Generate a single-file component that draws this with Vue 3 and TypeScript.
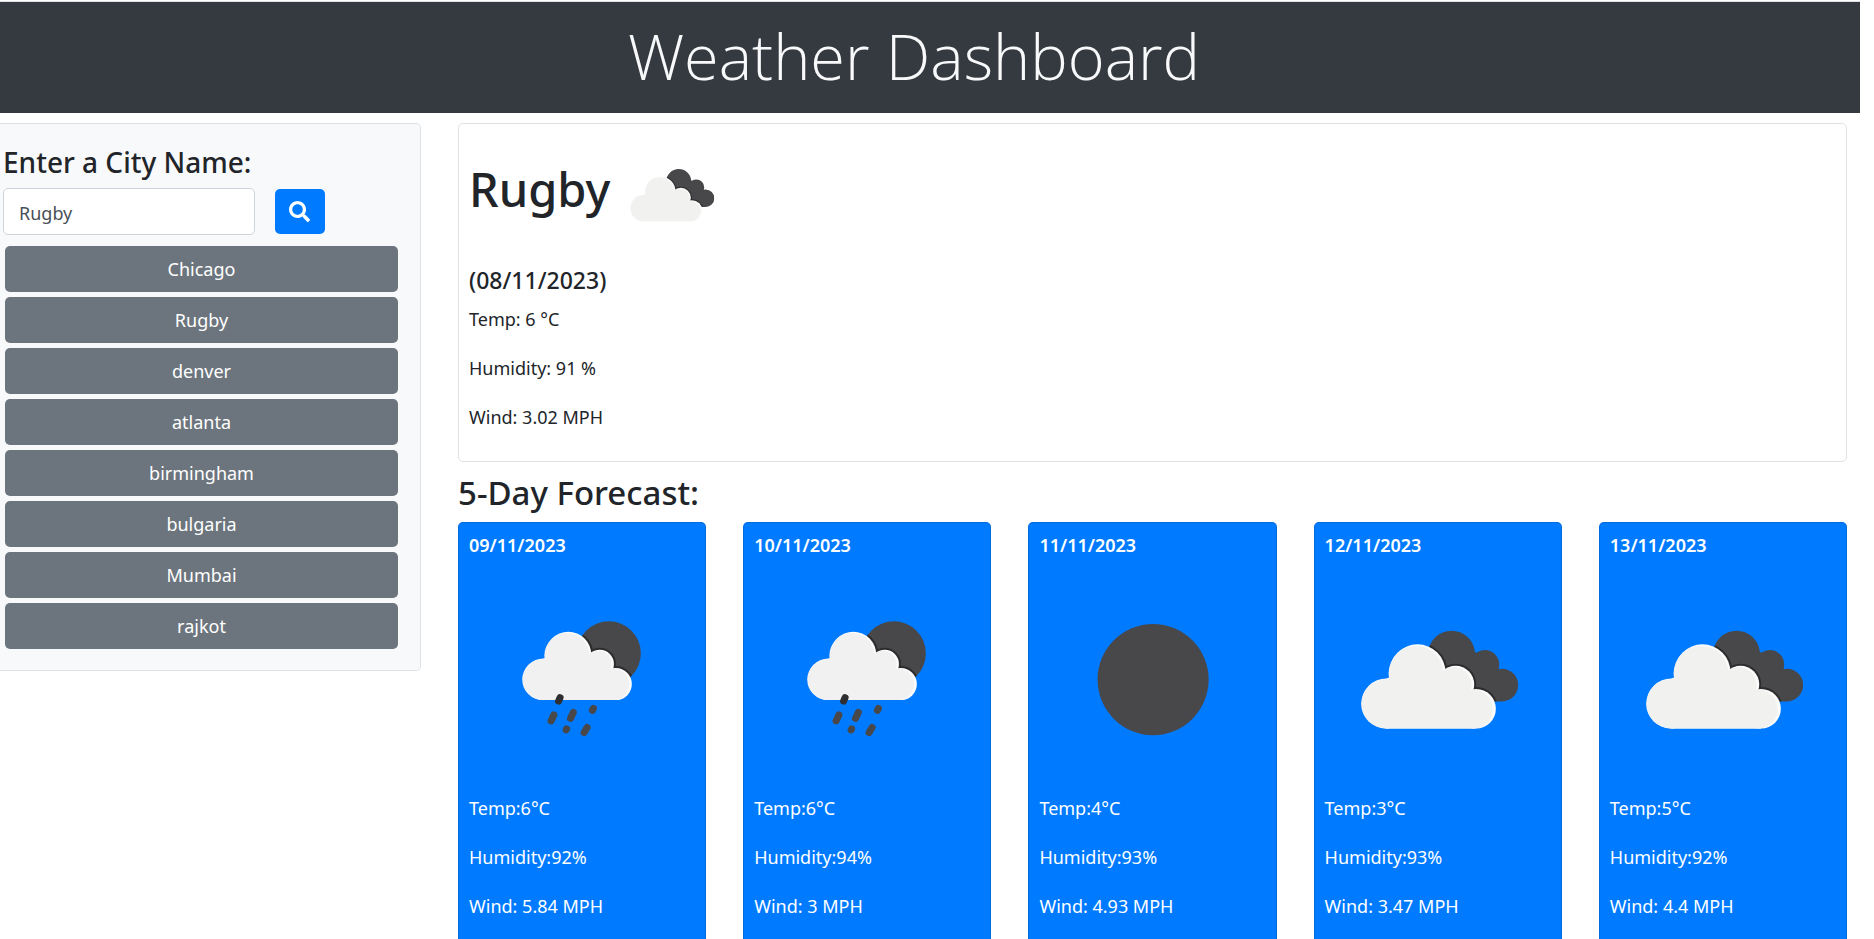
<script setup lang="ts">
import { ref } from 'vue'

type IconName = 'rain' | 'clear' | 'clouds'

interface Forecast {
  date: string
  icon: IconName
  temp: number
  humidity: number
  wind: number
}

const query = ref('Rugby')
const city = ref('Rugby')
const cities = ['Chicago', 'Rugby', 'denver', 'atlanta', 'birmingham', 'bulgaria', 'Mumbai', 'rajkot']

const forecast: Forecast[] = [
  { date: '09/11/2023', icon: 'rain', temp: 6, humidity: 92, wind: 5.84 },
  { date: '10/11/2023', icon: 'rain', temp: 6, humidity: 94, wind: 3 },
  { date: '11/11/2023', icon: 'clear', temp: 4, humidity: 93, wind: 4.93 },
  { date: '12/11/2023', icon: 'clouds', temp: 3, humidity: 93, wind: 3.47 },
  { date: '13/11/2023', icon: 'clouds', temp: 5, humidity: 92, wind: 4.4 },
]

function search() {
  if (query.value.trim()) city.value = query.value.trim()
}
</script>

<template>
  <svg class="sprite" aria-hidden="true">
    <defs>
      <clipPath id="back-cloud">
        <circle cx="126.5" cy="87" r="23.4" />
        <circle cx="159.5" cy="97.5" r="14.6" />
        <circle cx="176.7" cy="118" r="16.3" />
        <path d="M110 87 L149 84 L173 102 L177 134.3 L120 134.3 Z" />
      </clipPath>
      <clipPath id="moon">
        <circle cx="139.7" cy="86.3" r="32" />
      </clipPath>
      <g id="front-cloud">
        <circle cx="61.5" cy="136.3" r="25" />
        <circle cx="92.4" cy="105.3" r="28" />
        <circle cx="130.5" cy="117.3" r="18.6" />
        <circle cx="151" cy="141.6" r="19.7" />
        <path d="M61.5 161.3 L61.5 111.3 L92 100 L130 115 L151 125 L151 161.3 Z" />
      </g>
      <g id="rain-cloud">
        <circle cx="74.5" cy="112.2" r="20.8" />
        <circle cx="99.2" cy="87.7" r="23" />
        <circle cx="130.7" cy="96.8" r="14.1" />
        <circle cx="146.7" cy="117" r="16" />
        <path d="M74.5 133 L74.5 91.4 L99 86 L131 95 L146.7 108 L146.7 133 Z" />
      </g>
    </defs>
    <symbol id="icon-clouds" viewBox="0 0 226 226">
      <g clip-path="url(#back-cloud)">
        <rect width="226" height="226" fill="#48484a" />
        <use href="#front-cloud" fill="none" stroke="#2c2c2e" stroke-width="4" />
      </g>
      <use href="#front-cloud" fill="#fcfcfc" />
      <use href="#front-cloud" fill="#f1f1f0" transform="translate(0.4 3.2) scale(0.98)" />
    </symbol>
    <symbol id="icon-clear" viewBox="0 0 226 226">
      <circle cx="114" cy="112.5" r="55.5" fill="#48484a" />
    </symbol>
    <symbol id="icon-rain" viewBox="0 0 226 226">
      <g clip-path="url(#moon)">
        <rect width="226" height="226" fill="#48484a" />
        <use href="#rain-cloud" fill="none" stroke="#2c2c2e" stroke-width="4" />
      </g>
      <use href="#rain-cloud" fill="#fcfcfc" />
      <use href="#rain-cloud" fill="#f1f1f1" transform="translate(0.6 2.6) scale(0.98)" />
      <g fill="none" stroke="#48484a" stroke-width="7" stroke-linecap="round">
        <path d="M91 130.5 L89.5 134" stroke="#2f2f31" />
        <path d="M84.8 147.8 L82 153.8" />
        <path d="M104.2 145.3 L101.4 151.3" />
        <path d="M124.3 141.3 L123.3 143.3" />
        <path d="M97.5 161.8 L97 162.8" />
        <path d="M118 160.3 L115 165.3" />
      </g>
    </symbol>
  </svg>

  <header class="banner">
    <h1>Weather Dashboard</h1>
  </header>

  <div class="layout">
    <aside class="panel sidebar">
      <form class="search" @submit.prevent="search">
        <label for="city">Enter a City Name:</label>
        <div class="search-row">
          <input id="city" v-model="query" type="text" />
          <button type="submit" aria-label="Search">
            <svg viewBox="0 0 512 512" aria-hidden="true">
              <path fill="currentColor" d="M505 442.7L405.3 343c-4.5-4.5-10.6-7-17-7H372c27.6-35.3 44-79.7 44-128C416 93.1 322.9 0 208 0S0 93.1 0 208s93.1 208 208 208c48.3 0 92.7-16.4 128-44v16.3c0 6.4 2.5 12.5 7 17l99.7 99.7c9.4 9.4 24.6 9.4 33.9 0l28.3-28.3c9.4-9.4 9.4-24.6.1-34zM208 336c-70.7 0-128-57.2-128-128 0-70.7 57.2-128 128-128 70.7 0 128 57.2 128 128 0 70.7-57.2 128-128 128z" />
            </svg>
          </button>
        </div>
      </form>
      <ul class="cities">
        <li v-for="name in cities" :key="name">
          <button type="button" @click="city = name">{{ name }}</button>
        </li>
      </ul>
    </aside>

    <main>
      <section class="panel current">
        <div class="current-head">
          <h2>{{ city }}</h2>
          <svg class="current-icon" role="img" aria-label="Broken clouds"><use href="#icon-clouds" /></svg>
        </div>
        <h3>(08/11/2023)</h3>
        <p>Temp: 6 °C</p>
        <p>Humidity: 91 %</p>
        <p>Wind: 3.02 MPH</p>
      </section>

      <h2 class="forecast-title">5-Day Forecast:</h2>
      <section class="forecast">
        <article v-for="day in forecast" :key="day.date" class="card">
          <h3>{{ day.date }}</h3>
          <svg class="card-icon" role="img" :aria-label="day.icon"><use :href="`#icon-${day.icon}`" /></svg>
          <p>Temp:{{ day.temp }}°C</p>
          <p>Humidity:{{ day.humidity }}%</p>
          <p>Wind: {{ day.wind }} MPH</p>
        </article>
      </section>
    </main>
  </div>
</template>

<style>
body {
  margin: 0;
  background: #fff;
  color: #212529;
  font-family: "Noto Sans", "Open Sans", sans-serif;
  font-size: 18px;
  line-height: 30px;
}
</style>

<style scoped>
h1,
h2,
h3,
p,
ul {
  margin: 0;
  padding: 0;
}

.sprite {
  position: absolute;
  width: 0;
  height: 0;
}

.banner {
  margin: 1px 14px 10px 0;
  padding: 11px 32px 15px 0;
  border-top: 1px solid #dee2e6;
  background: #343a40;
  color: #f8f9fa;
  text-align: center;
}

.banner h1 {
  font-family: "Open Sans", "Noto Sans", sans-serif;
  font-size: 63px;
  font-weight: 300;
  line-height: 85px;
}

.layout {
  display: grid;
  grid-template-columns: 421fr 1389fr;
  gap: 37px;
  align-items: start;
  padding-right: 27px;
}

.panel {
  border: 1px solid #dee2e6;
  border-radius: 5px;
}

.sidebar {
  padding: 20px 22px 21px 3px;
  border-left: 0;
  border-radius: 0 5px 5px 0;
  background: #f8f9fa;
}

.search label {
  display: block;
  margin-bottom: 8px;
  font-size: 28px;
  font-weight: 500;
  line-height: 36px;
}

.search-row {
  display: flex;
  align-items: center;
  gap: 20px;
}

.search input {
  box-sizing: border-box;
  width: calc(64% - 1px);
  height: 47px;
  padding: 2px 15px 0;
  border: 1px solid #ced4da;
  border-radius: 5px;
  background: #fff;
  color: #495057;
  font: inherit;
}

.search button {
  display: flex;
  align-items: center;
  justify-content: center;
  width: 50px;
  height: 45px;
  padding: 0;
  border: 0;
  border-radius: 5px;
  background: #007bff;
  color: #fff;
}

.search button svg {
  width: 21px;
  height: 21px;
}

.cities {
  display: flex;
  flex-direction: column;
  gap: 5px;
  margin: 11px 0 0 2px;
  list-style: none;
}

.cities button {
  display: block;
  width: 100%;
  padding: 8px;
  border: 0;
  border-radius: 5px;
  background: #6c757d;
  color: #fff;
  font: inherit;
}

.current {
  padding: 11px 10px 10px;
}

.current-head {
  display: flex;
  align-items: center;
  gap: 1px;
}

.current-head h2 {
  padding-bottom: 14px;
  font-size: 47px;
  font-weight: 500;
  line-height: 60px;
}

.current-icon {
  width: 121px;
  height: 121px;
}

.current h3 {
  margin: 9px 0;
  font-size: 23px;
  font-weight: 500;
  line-height: 30px;
}

.current p,
.card p {
  margin-bottom: 19px;
}

.forecast-title {
  margin: 10px 0 8px;
  font-size: 33px;
  font-weight: 500;
  line-height: 42px;
}

.forecast {
  display: grid;
  grid-template-columns: repeat(5, 1fr);
  gap: 37px;
}

.card {
  padding: 10px;
  border: 1px solid rgba(0, 0, 0, 0.125);
  border-radius: 5px;
  background: #007bff;
  color: #fff;
}

.card h3 {
  font-size: 18px;
  font-weight: 600;
  line-height: 24px;
}

.card-icon {
  display: block;
  width: 100%;
  aspect-ratio: 1;
  margin-top: 10px;
}
</style>
